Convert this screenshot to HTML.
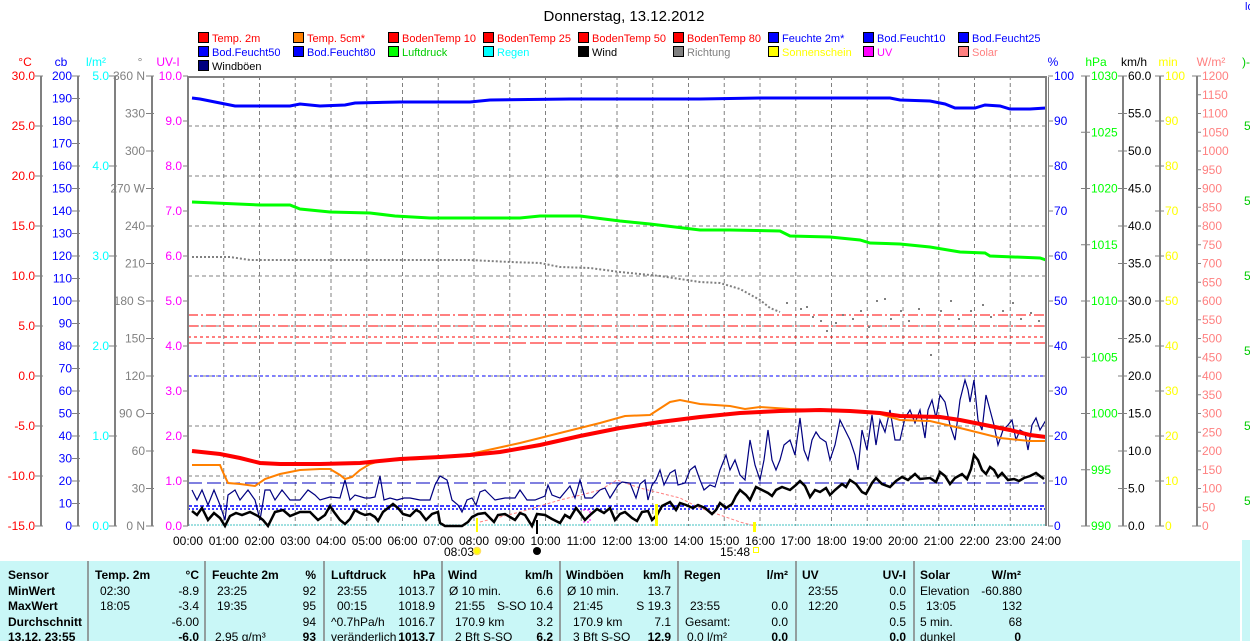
<!DOCTYPE html>
<html><head><meta charset="utf-8"><style>
html,body{margin:0;padding:0;background:#fff;width:1250px;height:641px;overflow:hidden}
svg{display:block;font-family:"Liberation Sans",sans-serif;font-size:12px}
.b{font-weight:bold}
.lg text{font-size:11px}
</style></head><body>
<svg width="1250" height="641" viewBox="0 0 1250 641" xmlns="http://www.w3.org/2000/svg">
<text x="624" y="21" text-anchor="middle" font-size="15">Donnerstag, 13.12.2012</text>
<!-- legend -->
<g stroke="#000" stroke-width="1">
<rect x="198.5" y="32.5" width="10" height="10" fill="#f00"/>
<rect x="293.5" y="32.5" width="10" height="10" fill="#ff8000"/>
<rect x="388.5" y="32.5" width="10" height="10" fill="#f00"/>
<rect x="483.5" y="32.5" width="10" height="10" fill="#f00"/>
<rect x="578.5" y="32.5" width="10" height="10" fill="#f00"/>
<rect x="673.5" y="32.5" width="10" height="10" fill="#f00"/>
<rect x="768.5" y="32.5" width="10" height="10" fill="#00f"/>
<rect x="863.5" y="32.5" width="10" height="10" fill="#00f"/>
<rect x="958.5" y="32.5" width="10" height="10" fill="#00f"/>
<rect x="198.5" y="46.5" width="10" height="10" fill="#00f"/>
<rect x="293.5" y="46.5" width="10" height="10" fill="#00f"/>
<rect x="388.5" y="46.5" width="10" height="10" fill="#0f0"/>
<rect x="483.5" y="46.5" width="10" height="10" fill="#0ff"/>
<rect x="578.5" y="46.5" width="10" height="10" fill="#000"/>
<rect x="673.5" y="46.5" width="10" height="10" fill="#808080"/>
<rect x="768.5" y="46.5" width="10" height="10" fill="#ff0"/>
<rect x="863.5" y="46.5" width="10" height="10" fill="#f0f"/>
<rect x="958.5" y="46.5" width="10" height="10" fill="#ff8080"/>
<rect x="198.5" y="60.5" width="10" height="10" fill="#000080"/>
</g>
<g class="lg">
<text x="212" y="42" fill="#f00">Temp. 2m</text>
<text x="307" y="42" fill="#f00">Temp. 5cm*</text>
<text x="402" y="42" fill="#f00">BodenTemp 10</text>
<text x="497" y="42" fill="#f00">BodenTemp 25</text>
<text x="592" y="42" fill="#f00">BodenTemp 50</text>
<text x="687" y="42" fill="#f00">BodenTemp 80</text>
<text x="782" y="42" fill="#00f">Feuchte 2m*</text>
<text x="877" y="42" fill="#00f">Bod.Feucht10</text>
<text x="972" y="42" fill="#00f">Bod.Feucht25</text>
<text x="212" y="56" fill="#00f">Bod.Feucht50</text>
<text x="307" y="56" fill="#00f">Bod.Feucht80</text>
<text x="402" y="56" fill="#0c0">Luftdruck</text>
<text x="497" y="56" fill="#0ff">Regen</text>
<text x="592" y="56" fill="#000">Wind</text>
<text x="687" y="56" fill="#808080">Richtung</text>
<text x="782" y="56" fill="#ff0">Sonnenschein</text>
<text x="877" y="56" fill="#f0f">UV</text>
<text x="972" y="56" fill="#ff8080">Solar</text>
<text x="212" y="70" fill="#000">Windböen</text>
</g>
<text x="1245" y="10" fill="#00f" font-size="11">lo</text>
<!-- unit labels -->
<text x="25" y="66" fill="#f00" text-anchor="middle">°C</text>
<text x="61" y="66" fill="#00f" text-anchor="middle">cb</text>
<text x="96" y="66" fill="#0ff" text-anchor="middle">l/m²</text>
<text x="140" y="66" fill="#808080" text-anchor="middle">°</text>
<text x="168" y="66" fill="#f0f" text-anchor="middle">UV-I</text>
<text x="1053" y="66" fill="#00f" text-anchor="middle">%</text>
<text x="1096" y="66" fill="#0f0" text-anchor="middle">hPa</text>
<text x="1134" y="66" fill="#000" text-anchor="middle">km/h</text>
<text x="1168" y="66" fill="#ff0" text-anchor="middle">min</text>
<text x="1211" y="66" fill="#ff8080" text-anchor="middle">W/m²</text>
<text x="1242" y="66" fill="#0c0">)-</text>
<!-- axis lines -->
<g stroke="#808080" stroke-width="2">
<line x1="41" y1="76" x2="41" y2="526"/><line x1="78" y1="76" x2="78" y2="526"/>
<line x1="115" y1="76" x2="115" y2="526"/><line x1="152" y1="76" x2="152" y2="526"/>
<line x1="1086" y1="76" x2="1086" y2="526"/><line x1="1123" y1="76" x2="1123" y2="526"/>
<line x1="1160" y1="76" x2="1160" y2="526"/><line x1="1197" y1="76" x2="1197" y2="526"/>
</g>
<g fill="#f00" text-anchor="end">
<text x="35" y="80">30.0</text><text x="35" y="130">25.0</text><text x="35" y="180">20.0</text><text x="35" y="230">15.0</text><text x="35" y="280">10.0</text><text x="35" y="330">5.0</text><text x="35" y="380">0.0</text><text x="35" y="430">-5.0</text><text x="35" y="480">-10.0</text><text x="35" y="530">-15.0</text>
</g>
<g stroke="#808080"><path d="M35 76h8M35 126h8M35 176h8M35 226h8M35 276h8M35 326h8M35 376h8M35 426h8M35 476h8M35 526h8"/>
<path d="M72 76h8M72 98.5h8M72 121h8M72 143.5h8M72 166h8M72 188.5h8M72 211h8M72 233.5h8M72 256h8M72 278.5h8M72 301h8M72 323.5h8M72 346h8M72 368.5h8M72 391h8M72 413.5h8M72 436h8M72 458.5h8M72 481h8M72 503.5h8M72 526h8"/>
<path d="M109 76h8M109 166h8M109 256h8M109 346h8M109 436h8M109 526h8"/>
<path d="M146 76h8M146 113.5h8M146 151h8M146 188.5h8M146 226h8M146 263.5h8M146 301h8M146 338.5h8M146 376h8M146 413.5h8M146 451h8M146 488.5h8M146 526h8"/>
<path d="M183 76h5M183 121h5M183 166h5M183 211h5M183 256h5M183 301h5M183 346h5M183 391h5M183 436h5M183 481h5M183 526h5"/>
<path d="M1048 76h5M1048 121h5M1048 166h5M1048 211h5M1048 256h5M1048 301h5M1048 346h5M1048 391h5M1048 436h5M1048 481h5M1048 526h5"/>
<path d="M1081 76h9M1081 132.25h9M1081 188.5h9M1081 244.75h9M1081 301h9M1081 357.25h9M1081 413.5h9M1081 469.75h9M1081 526h9"/>
<path d="M1118 76h9M1118 113.5h9M1118 151h9M1118 188.5h9M1118 226h9M1118 263.5h9M1118 301h9M1118 338.5h9M1118 376h9M1118 413.5h9M1118 451h9M1118 488.5h9M1118 526h9"/>
<path d="M1155 76h9M1155 121h9M1155 166h9M1155 211h9M1155 256h9M1155 301h9M1155 346h9M1155 391h9M1155 436h9M1155 481h9M1155 526h9"/>
<path d="M1192 76h9M1197 94.75h4M1197 113.5h4M1197 132.25h4M1197 151h4M1197 169.75h4M1197 188.5h4M1197 207.25h4M1197 226h4M1197 244.75h4M1197 263.5h4M1197 282.25h4M1197 301h4M1197 319.75h4M1197 338.5h4M1197 357.25h4M1197 376h4M1197 394.75h4M1197 413.5h4M1197 432.25h4M1197 451h4M1197 469.75h4M1197 488.5h4M1197 507.25h4M1192 526h9"/>
</g>
<g fill="#00f" text-anchor="end">
<text x="72" y="80">200</text><text x="72" y="102.5">190</text><text x="72" y="125">180</text><text x="72" y="147.5">170</text><text x="72" y="170">160</text><text x="72" y="192.5">150</text><text x="72" y="215">140</text><text x="72" y="237.5">130</text><text x="72" y="260">120</text><text x="72" y="282.5">110</text><text x="72" y="305">100</text><text x="72" y="327.5">90</text><text x="72" y="350">80</text><text x="72" y="372.5">70</text><text x="72" y="395">60</text><text x="72" y="417.5">50</text><text x="72" y="440">40</text><text x="72" y="462.5">30</text><text x="72" y="485">20</text><text x="72" y="507.5">10</text><text x="72" y="530">0</text>
</g>
<g fill="#0ff" text-anchor="end">
<text x="109" y="80">5.0</text><text x="109" y="170">4.0</text><text x="109" y="260">3.0</text><text x="109" y="350">2.0</text><text x="109" y="440">1.0</text><text x="109" y="530">0.0</text>
</g>
<g fill="#808080" text-anchor="end">
<text x="145" y="80">360 N</text><text x="145" y="117.5">330</text><text x="145" y="155">300</text><text x="145" y="192.5">270 W</text><text x="145" y="230">240</text><text x="145" y="267.5">210</text><text x="145" y="305">180 S</text><text x="145" y="342.5">150</text><text x="145" y="380">120</text><text x="145" y="417.5">90 O</text><text x="145" y="455">60</text><text x="145" y="492.5">30</text><text x="145" y="530">0 N</text>
</g>
<g fill="#f0f" text-anchor="end">
<text x="182" y="80">10.0</text><text x="182" y="125">9.0</text><text x="182" y="170">8.0</text><text x="182" y="215">7.0</text><text x="182" y="260">6.0</text><text x="182" y="305">5.0</text><text x="182" y="350">4.0</text><text x="182" y="395">3.0</text><text x="182" y="440">2.0</text><text x="182" y="485">1.0</text><text x="182" y="530">0.0</text>
</g>
<g fill="#00f">
<text x="1054" y="80">100</text><text x="1054" y="125">90</text><text x="1054" y="170">80</text><text x="1054" y="215">70</text><text x="1054" y="260">60</text><text x="1054" y="305">50</text><text x="1054" y="350">40</text><text x="1054" y="395">30</text><text x="1054" y="440">20</text><text x="1054" y="485">10</text><text x="1054" y="530">0</text>
</g>
<g fill="#0f0">
<text x="1091" y="80">1030</text><text x="1091" y="136.25">1025</text><text x="1091" y="192.5">1020</text><text x="1091" y="248.75">1015</text><text x="1091" y="305">1010</text><text x="1091" y="361.25">1005</text><text x="1091" y="417.5">1000</text><text x="1091" y="473.75">995</text><text x="1091" y="530">990</text>
</g>
<g fill="#000">
<text x="1128" y="80">60.0</text><text x="1128" y="117.5">55.0</text><text x="1128" y="155">50.0</text><text x="1128" y="192.5">45.0</text><text x="1128" y="230">40.0</text><text x="1128" y="267.5">35.0</text><text x="1128" y="305">30.0</text><text x="1128" y="342.5">25.0</text><text x="1128" y="380">20.0</text><text x="1128" y="417.5">15.0</text><text x="1128" y="455">10.0</text><text x="1128" y="492.5">5.0</text><text x="1128" y="530">0.0</text>
</g>
<g fill="#ff0">
<text x="1165" y="80">100</text><text x="1165" y="125">90</text><text x="1165" y="170">80</text><text x="1165" y="215">70</text><text x="1165" y="260">60</text><text x="1165" y="305">50</text><text x="1165" y="350">40</text><text x="1165" y="395">30</text><text x="1165" y="440">20</text><text x="1165" y="485">10</text><text x="1165" y="530">0</text>
</g>
<g fill="#ff8080">
<text x="1202" y="80">1200</text><text x="1202" y="98.75">1150</text><text x="1202" y="117.5">1100</text><text x="1202" y="136.25">1050</text><text x="1202" y="155">1000</text><text x="1202" y="173.75">950</text><text x="1202" y="192.5">900</text><text x="1202" y="211.25">850</text><text x="1202" y="230">800</text><text x="1202" y="248.75">750</text><text x="1202" y="267.5">700</text><text x="1202" y="286.25">650</text><text x="1202" y="305">600</text><text x="1202" y="323.75">550</text><text x="1202" y="342.5">500</text><text x="1202" y="361.25">450</text><text x="1202" y="380">400</text><text x="1202" y="398.75">350</text><text x="1202" y="417.5">300</text><text x="1202" y="436.25">250</text><text x="1202" y="455">200</text><text x="1202" y="473.75">150</text><text x="1202" y="492.5">100</text><text x="1202" y="511.25">50</text><text x="1202" y="530">0</text>
</g>
<g fill="#0c0"><text x="1244" y="130">5</text><text x="1244" y="205">5</text><text x="1244" y="280">5</text><text x="1244" y="355">5</text><text x="1244" y="430">5</text><text x="1244" y="505">5</text></g>
<!-- grid -->
<g stroke="#808080" stroke-width="1" stroke-dasharray="4,3">
<path d="M223.75 76V526M259.5 76V526M295.25 76V526M331 76V526M366.75 76V526M402.5 76V526M438.25 76V526M474 76V526M509.75 76V526M545.5 76V526M581.25 76V526M617 76V526M652.75 76V526M688.5 76V526M724.25 76V526M760 76V526M795.75 76V526M831.5 76V526M867.25 76V526M903 76V526M938.75 76V526M974.5 76V526M1010.25 76V526"/>
<path d="M188 126H1046M188 176H1046M188 226H1046M188 276H1046M188 326H1046M188 376H1046M188 426H1046M188 476H1046"/>
</g>
<line x1="188" y1="376" x2="1046" y2="376" stroke="#00f" stroke-dasharray="3,3"/>
<line x1="188" y1="315" x2="1046" y2="315" stroke="#f00" stroke-dasharray="10,3,2,3"/>
<line x1="188" y1="326" x2="1046" y2="326" stroke="#f00" stroke-dasharray="10,3,2,3"/>
<line x1="188" y1="337" x2="1046" y2="337" stroke="#f00" stroke-dasharray="3,3"/>
<line x1="188" y1="343" x2="1046" y2="343" stroke="#f00" stroke-dasharray="14,4"/>
<line x1="188" y1="483" x2="1046" y2="483" stroke="#0000c0" stroke-dasharray="14,5"/>
<line x1="188" y1="506" x2="1046" y2="506" stroke="#00f" stroke-width="1.5" stroke-dasharray="4,2"/>
<line x1="188" y1="509" x2="1046" y2="509" stroke="#00f" stroke-width="1.5" stroke-dasharray="2,2"/>
<line x1="188" y1="525" x2="1046" y2="525" stroke="#40c0c0" stroke-dasharray="2,1"/>
<polyline fill="none" stroke="#00f" stroke-width="3" points="192,98 200,99 215,102 235,106 290,106 300,104 320,106 345,105 355,103 400,102 470,102 490,100 570,99 700,99 760,98 890,98 900,100 930,101 945,104 955,108 975,108 985,105 1000,106 1010,109 1030,109 1046,108"/>
<polyline fill="none" stroke="#0f0" stroke-width="3" points="192,202 215,203 260,205 290,205 300,209 330,212 370,213 395,216 430,218 520,218 540,216 580,216 620,221 650,224 700,230 730,230 780,231 790,236 830,237 860,240 870,243 900,244 930,247 960,252 985,253 990,256 1040,258 1046,260"/>
<polyline fill="none" stroke="#808080" stroke-width="2" stroke-dasharray="2,2" points="192,257 230,257 250,260 300,260 470,260 510,262 540,263 560,267 590,268 620,272 660,276 700,282 720,283 740,289 760,300 770,308 780,312"/>
<g fill="#808080">
<rect x="786" y="302" width="2" height="2"/><rect x="800" y="308" width="2" height="2"/><rect x="806" y="306" width="2" height="2"/><rect x="812" y="316" width="2" height="2"/><rect x="820" y="320" width="2" height="2"/><rect x="826" y="330" width="2" height="2"/><rect x="835" y="322" width="2" height="2"/><rect x="842" y="314" width="2" height="2"/><rect x="852" y="318" width="2" height="2"/><rect x="860" y="310" width="2" height="2"/><rect x="868" y="326" width="2" height="2"/><rect x="876" y="300" width="2" height="2"/><rect x="884" y="298" width="2" height="2"/><rect x="890" y="318" width="2" height="2"/><rect x="900" y="310" width="2" height="2"/><rect x="908" y="320" width="2" height="2"/><rect x="918" y="308" width="2" height="2"/><rect x="930" y="354" width="2" height="2"/><rect x="940" y="310" width="2" height="2"/><rect x="950" y="300" width="2" height="2"/><rect x="958" y="318" width="2" height="2"/><rect x="970" y="310" width="2" height="2"/><rect x="982" y="304" width="2" height="2"/><rect x="990" y="316" width="2" height="2"/><rect x="1002" y="310" width="2" height="2"/><rect x="1012" y="302" width="2" height="2"/><rect x="1020" y="318" width="2" height="2"/><rect x="1030" y="312" width="2" height="2"/><rect x="1038" y="320" width="2" height="2"/>
</g>
<polyline fill="none" stroke="#ff8080" stroke-width="1" stroke-dasharray="3,2" points="480,522 520,512 560,500 585,494 600,490 617,480 640,488 680,498 700,508 720,515 740,522 755,526"/>
<polyline fill="none" stroke="#f0f" stroke-width="1" stroke-dasharray="2,2" points="583,510 590,510 590,522 583,522"/>
<polyline fill="none" stroke="#000080" stroke-width="1.2" points="192,490 197,500 202,490 208,505 214,490 220,505 225,520 228,495 235,490 240,500 248,490 255,500 260,520 265,490 270,490 275,500 282,490 290,500 300,500 308,490 315,495 320,500 330,497 340,498 345,480 350,500 355,495 365,498 370,498 375,497 380,476 384,500 390,498 397,500 404,498 410,498 420,500 430,500 435,485 440,476 447,480 452,500 458,505 462,512 467,500 472,498 476,505 480,492 485,490 490,495 495,500 505,498 515,498 520,490 527,500 535,500 545,496 548,485 552,495 560,498 570,486 575,498 580,480 585,498 592,498 600,490 605,488 610,498 618,485 622,482 630,483 636,498 640,484 645,480 648,500 652,485 656,480 660,470 664,485 670,473 675,470 678,485 685,483 690,470 695,466 700,480 704,490 710,485 715,487 720,470 726,455 730,470 735,460 740,475 745,480 750,440 755,465 760,480 764,460 768,430 772,460 776,470 780,460 784,445 790,440 795,455 800,418 804,450 808,460 812,440 816,432 820,438 826,442 830,460 835,445 840,420 845,430 850,440 855,455 858,470 862,430 867,450 872,415 876,445 880,420 885,432 890,410 895,440 900,440 905,418 910,410 915,423 920,410 925,438 928,410 932,400 936,418 940,395 945,402 950,425 955,440 960,400 965,380 968,390 970,402 974,380 978,420 982,430 986,395 990,410 994,425 998,445 1003,430 1008,425 1012,420 1016,440 1020,430 1025,433 1028,450 1032,425 1036,418 1040,430 1046,420"/>
<polyline fill="none" stroke="#000" stroke-width="2.5" points="192,511 197,515 202,508 208,520 214,513 220,518 225,526 230,516 236,513 242,515 250,512 258,516 263,520 268,526 275,512 283,510 290,516 300,512 310,512 318,520 325,515 330,506 334,512 340,520 345,524 350,519 355,510 360,513 365,515 370,514 375,517 378,521 383,512 388,508 393,504 398,508 403,514 410,516 416,510 420,512 426,520 432,514 438,512 440,523 445,526 455,526 462,526 468,522 472,517 478,514 485,513 490,518 494,522 498,515 505,514 510,517 515,520 520,513 525,515 532,526 537,514 545,515 552,519 560,523 565,515 570,518 576,508 580,513 585,520 590,515 597,509 604,513 610,508 615,520 620,514 625,512 632,518 637,521 642,512 648,511 652,520 657,515 662,506 670,502 676,510 680,503 686,505 693,508 698,505 705,508 712,514 716,510 720,503 726,508 732,504 736,496 740,490 746,495 750,500 756,487 762,490 768,493 772,496 776,490 782,487 790,490 796,485 800,481 805,486 810,497 815,490 820,492 826,488 830,495 835,490 842,484 846,487 850,480 856,484 862,492 866,494 872,483 876,478 882,484 890,487 896,481 902,477 908,480 915,474 920,479 930,478 936,482 940,472 945,476 950,484 955,478 962,474 967,479 971,469 974,455 978,460 982,470 986,474 990,467 994,470 998,477 1002,473 1008,480 1014,479 1019,481 1024,478 1030,476 1036,473 1040,476 1044,479"/>
<polyline fill="none" stroke="#ff8000" stroke-width="2" points="192,465 220,465 222,470 228,483 240,484 255,486 265,479 280,474 300,470 320,469 330,469 340,475 345,479 352,477 360,470 370,464 380,461 420,459 470,454 520,443 560,433 600,423 625,416 650,415 670,402 680,400 700,404 730,406 745,409 760,407 790,409 820,410 860,412 880,414 900,420 930,421 960,428 1000,438 1030,441 1046,441"/>
<polyline fill="none" stroke="#f00" stroke-width="4" points="192,451 220,454 240,458 260,463 280,464 320,464 360,463 400,459 440,457 470,455 500,452 540,445 580,436 620,428 660,422 700,417 740,413 780,411 820,410 850,411 880,413 900,416 940,417 960,420 980,424 1010,430 1030,435 1046,437"/>
<rect x="476" y="518" width="2" height="14" fill="#ff0"/>
<rect x="655" y="504" width="3" height="22" fill="#ff0"/>
<rect x="753" y="522" width="3" height="10" fill="#ff0"/>
<rect x="536" y="520" width="2" height="14" fill="#000"/>
<g stroke="#808080" stroke-width="2" fill="none">
<path d="M188 526V77H1046V526"/>
<line x1="1048.5" y1="77" x2="1048.5" y2="526" stroke-width="1"/>
</g>
<g text-anchor="middle">
<text x="188" y="545">00:00</text><text x="223.75" y="545">01:00</text><text x="259.5" y="545">02:00</text><text x="295.25" y="545">03:00</text><text x="331" y="545">04:00</text><text x="366.75" y="545">05:00</text><text x="402.5" y="545">06:00</text><text x="438.25" y="545">07:00</text><text x="474" y="545">08:00</text><text x="509.75" y="545">09:00</text><text x="545.5" y="545">10:00</text><text x="581.25" y="545">11:00</text><text x="617" y="545">12:00</text><text x="652.75" y="545">13:00</text><text x="688.5" y="545">14:00</text><text x="724.25" y="545">15:00</text><text x="760" y="545">16:00</text><text x="795.75" y="545">17:00</text><text x="831.5" y="545">18:00</text><text x="867.25" y="545">19:00</text><text x="903" y="545">20:00</text><text x="938.75" y="545">21:00</text><text x="974.5" y="545">22:00</text><text x="1010.25" y="545">23:00</text><text x="1046" y="545">24:00</text>
</g>
<text x="444" y="556">08:03</text>
<circle cx="477" cy="551" r="3.5" fill="#ff0" stroke="#ffe060" stroke-width="1.5"/>
<circle cx="537" cy="551" r="4" fill="#000"/>
<text x="720" y="556">15:48</text>
<rect x="753.5" y="547.5" width="5" height="5" fill="none" stroke="#ff0"/>
<rect x="0" y="561" width="1240" height="80" fill="#c9f7f7"/>
<rect x="1242" y="540" width="8" height="101" fill="#c9f7f7"/>
<g stroke="#808080" stroke-width="1.5">
<path d="M88 561V641M205 561V641M324 561V641M442 561V641M560 561V641M678 561V641M796 561V641M914 561V641"/>
</g>
<g class="b">
<text x="8" y="579">Sensor</text><text x="8" y="595">MinWert</text><text x="8" y="610">MaxWert</text><text x="8" y="626">Durchschnitt</text><text x="8" y="641">13.12. 23:55</text>
<text x="95" y="579">Temp. 2m</text><text x="212" y="579">Feuchte 2m</text><text x="331" y="579">Luftdruck</text><text x="448" y="579">Wind</text><text x="566" y="579">Windböen</text><text x="684" y="579">Regen</text><text x="802" y="579">UV</text><text x="920" y="579">Solar</text>
</g>
<g class="b" text-anchor="end">
<text x="199" y="579">°C</text><text x="316" y="579">%</text><text x="435" y="579">hPa</text><text x="553" y="579">km/h</text><text x="671" y="579">km/h</text><text x="788" y="579">l/m²</text><text x="906" y="579">UV-I</text><text x="1021" y="579">W/m²</text>
<text x="199" y="641">-6.0</text><text x="316" y="641">93</text><text x="435" y="641">1013.7</text><text x="553" y="641">6.2</text><text x="671" y="641">12.9</text><text x="788" y="641">0.0</text><text x="906" y="641">0.0</text><text x="1021" y="641">0</text>
</g>
<g>
<text x="100" y="595">02:30</text><text x="100" y="610">18:05</text>
<text x="217" y="595">23:25</text><text x="217" y="610">19:35</text><text x="215" y="641">2.95 g/m³</text>
<text x="337" y="595">23:55</text><text x="337" y="610">00:15</text><text x="331" y="626">^0.7hPa/h</text><text x="331" y="641">veränderlich</text>
<text x="449" y="595">Ø 10 min.</text><text x="455" y="610">21:55</text><text x="455" y="626">170.9 km</text><text x="455" y="641">2 Bft S-SO</text>
<text x="567" y="595">Ø 10 min.</text><text x="573" y="610">21:45</text><text x="573" y="626">170.9 km</text><text x="573" y="641">3 Bft S-SO</text>
<text x="690" y="610">23:55</text><text x="685" y="626">Gesamt:</text><text x="687" y="641">0.0 l/m²</text>
<text x="808" y="595">23:55</text><text x="808" y="610">12:20</text>
<text x="920" y="595">Elevation</text><text x="926" y="610">13:05</text><text x="920" y="626">5 min.</text><text x="920" y="641">dunkel</text>
</g>
<g text-anchor="end">
<text x="199" y="595">-8.9</text><text x="199" y="610">-3.4</text><text x="199" y="626">-6.00</text>
<text x="316" y="595">92</text><text x="316" y="610">95</text><text x="316" y="626">94</text>
<text x="435" y="595">1013.7</text><text x="435" y="610">1018.9</text><text x="435" y="626">1016.7</text>
<text x="553" y="595">6.6</text><text x="553" y="610">S-SO 10.4</text><text x="553" y="626">3.2</text>
<text x="671" y="595">13.7</text><text x="671" y="610">S 19.3</text><text x="671" y="626">7.1</text>
<text x="788" y="610">0.0</text><text x="788" y="626">0.0</text>
<text x="906" y="595">0.0</text><text x="906" y="610">0.5</text><text x="906" y="626">0.5</text>
<text x="1022" y="595">-60.880</text><text x="1022" y="610">132</text><text x="1022" y="626">68</text>
</g>
</svg>
</body></html>
